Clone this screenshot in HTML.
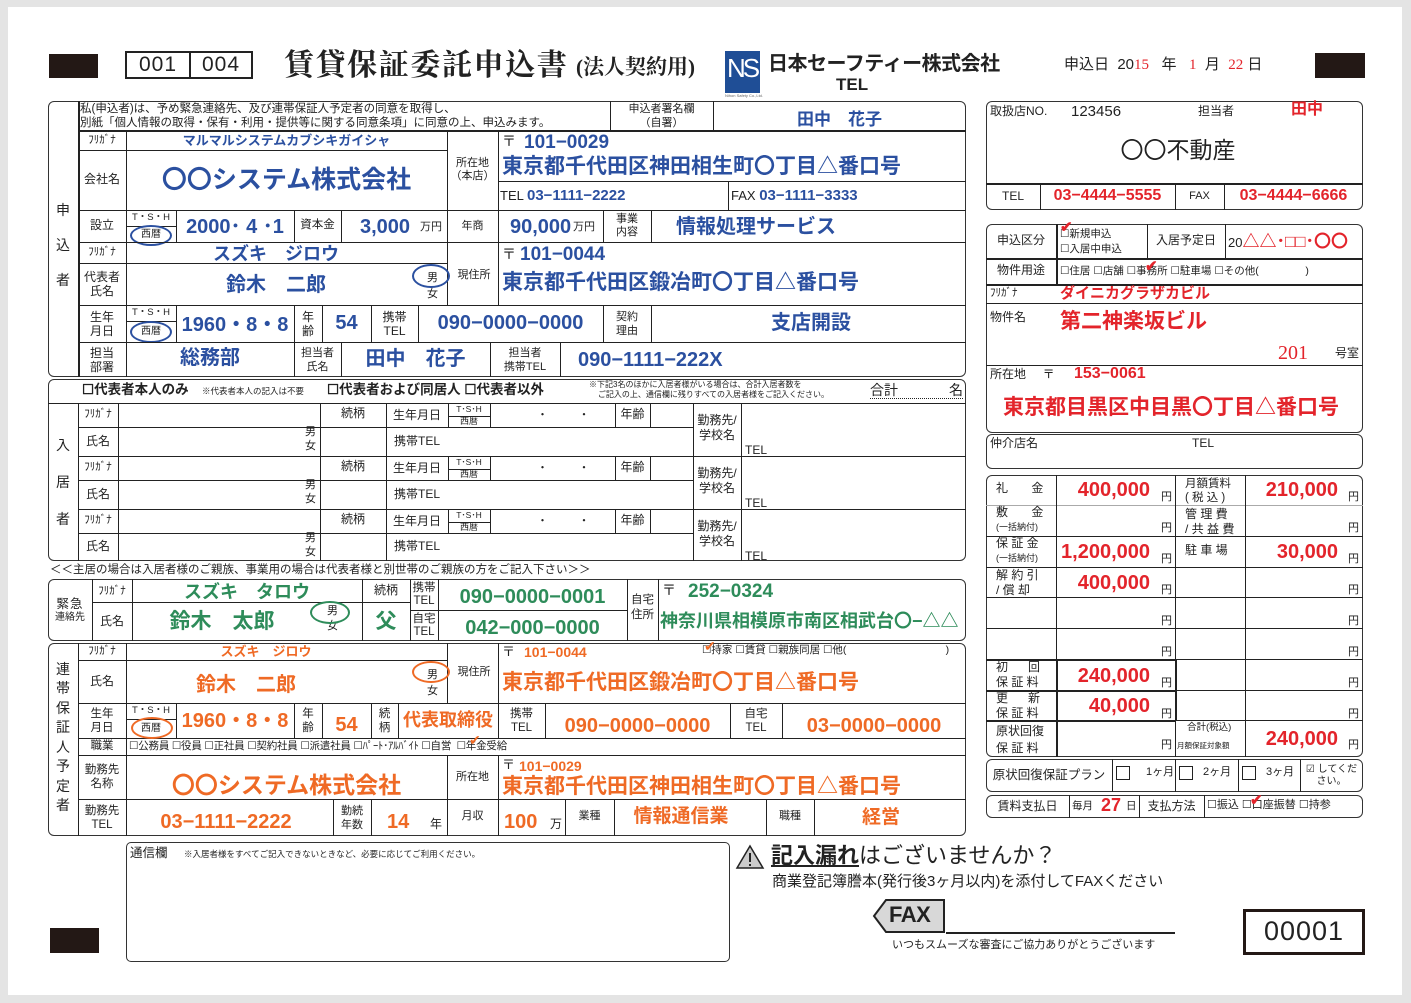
<!DOCTYPE html>
<html><head><meta charset="utf-8">
<style>
*{margin:0;padding:0;box-sizing:border-box}
body{width:1411px;height:1003px;background:#e4e4e4;position:relative;overflow:hidden;font-family:"Liberation Sans","Noto Sans CJK JP",sans-serif;color:#222}
.sheet{position:absolute;left:8px;top:7px;width:1394px;height:988px;background:#fff}
.a{position:absolute;white-space:nowrap;line-height:1}
.c{position:absolute;display:flex;align-items:center;justify-content:center;text-align:center;line-height:1.15;white-space:nowrap}
.h{position:absolute;height:0;border-top:1px solid #222}
.v{position:absolute;width:0;border-left:1px solid #222}
.bx{position:absolute;border:1.5px solid #333;border-radius:6px}
.B{color:#2b50a0;font-weight:bold}
.G{color:#2e8c5a;font-weight:bold}
.O{color:#ef6a25;font-weight:bold}
.R{color:#e3242b;font-weight:bold}
.el{position:absolute;border:2px solid;border-radius:50%}
.s{font-size:11px}
</style></head><body>
<div class="sheet"></div>

<!-- header -->
<div class="a" style="left:49px;top:54px;width:49px;height:24px;background:#231815"></div>
<div class="a" style="left:125px;top:51px;width:128px;height:28px;border:2px solid #222"></div>
<div class="v" style="left:189px;top:51px;height:28px;border-left-width:2px"></div>
<div class="c" style="left:127px;top:52px;width:62px;height:26px;font-size:21px;letter-spacing:1px">001</div>
<div class="c" style="left:190px;top:52px;width:62px;height:26px;font-size:21px;letter-spacing:1px">004</div>
<div class="a" style="left:284px;top:51px;font-family:'Liberation Serif','Noto Serif CJK SC',serif;font-size:30px;letter-spacing:1.6px;font-weight:bold">賃貸保証委託申込書</div>
<div class="a" style="left:576px;top:57px;font-family:'Liberation Serif','Noto Serif CJK SC',serif;font-size:21px;font-weight:bold">(法人契約用)</div>
<div class="a" style="left:725px;top:51px;width:35px;height:42px;background:#1f4e96"></div>
<div class="a" style="left:727px;top:55px;color:#fff;font-size:26px;font-family:'Liberation Sans',sans-serif;letter-spacing:-3px">NS</div>
<div class="a" style="left:725px;top:94px;font-size:4px;color:#666">Nihon Safety Co.,Ltd.</div>
<div class="a" style="left:768px;top:54px;font-size:20px;font-weight:bold;letter-spacing:-0.5px">日本セーフティー株式会社</div>
<div class="a" style="left:836px;top:76px;font-size:17px;font-weight:bold">TEL</div>
<div class="a" style="left:1064px;top:57px;font-size:15px">申込日&nbsp; 20<span style="color:#e3242b;font-family:'Liberation Serif',serif">15</span>&nbsp;&nbsp; 年&nbsp;&nbsp; <span style="color:#e3242b;font-family:'Liberation Serif',serif">1</span>&nbsp; 月&nbsp;&nbsp;<span style="color:#e3242b;font-family:'Liberation Serif',serif">22</span> 日</div>
<div class="a" style="left:1315px;top:53px;width:50px;height:25px;background:#231815"></div>

<!-- Section 1 -->
<div class="bx" style="left:48px;top:101px;width:918px;height:276px"></div>
<div class="v" style="left:78px;top:101px;height:276px;border-left-width:2px"></div>
<div class="c" style="left:48px;top:195px;width:30px;height:100px;font-size:14px;line-height:35px;flex-direction:column">申<br>込<br>者</div>
<div class="a" style="left:80px;top:103px;font-size:11.5px;line-height:13.5px">私(申込者)は、予め緊急連絡先、及び連帯保証人予定者の同意を取得し、<br>別紙「個人情報の取得・保有・利用・提供等に関する同意条項」に同意の上、申込みます。</div>
<div class="v" style="left:610px;top:101px;height:29px"></div>
<div class="v" style="left:713px;top:101px;height:29px"></div>
<div class="c s" style="left:610px;top:101px;width:103px;height:29px;line-height:14px">申込者署名欄<br>（自署）</div>
<div class="c B" style="left:713px;top:107px;width:253px;height:26px;font-size:17px">田中　花子</div>
<div class="h" style="left:78px;top:130px;width:888px;border-top-width:2px"></div>
<div class="h" style="left:78px;top:150px;width:369px"></div>
<div class="h" style="left:78px;top:210px;width:888px"></div>
<div class="v" style="left:126px;top:130px;height:247px"></div>
<div class="v" style="left:447px;top:130px;height:175px"></div>
<div class="v" style="left:498px;top:130px;height:175px"></div>
<div class="h" style="left:498px;top:181px;width:468px"></div>
<div class="v" style="left:728px;top:181px;height:29px"></div>
<div class="c s" style="left:78px;top:130px;width:48px;height:20px">ﾌﾘｶﾞﾅ</div>
<div class="c B" style="left:126px;top:130px;width:321px;height:22px;font-size:13px">マルマルシステムカブシキガイシャ</div>
<div class="c" style="left:78px;top:150px;width:48px;height:60px;font-size:12px">会社名</div>
<div class="c B" style="left:126px;top:150px;width:321px;height:60px;font-size:25px">〇〇システム株式会社</div>
<div class="c s" style="left:447px;top:150px;width:51px;height:40px;line-height:13px">所在地<br>（本店）</div>
<div class="a" style="left:502px;top:134px;font-size:14px">〒</div>
<div class="a B" style="left:524px;top:133px;font-size:19px">101−0029</div>
<div class="a B" style="left:502px;top:156px;font-size:21px">東京都千代田区神田相生町〇丁目△番口号</div>
<div class="a" style="left:500px;top:188px;font-size:13px">TEL <span class="B" style="font-size:15px">03−1111−2222</span></div>
<div class="a" style="left:731px;top:188px;font-size:13px">FAX <span class="B" style="font-size:15px">03−1111−3333</span></div>
<!-- 設立 row -->
<div class="v" style="left:176px;top:210px;height:32px"></div>
<div class="v" style="left:294px;top:210px;height:32px"></div>
<div class="v" style="left:341px;top:210px;height:32px"></div>
<div class="v" style="left:603px;top:210px;height:32px"></div>
<div class="v" style="left:651px;top:210px;height:32px"></div>
<div class="h" style="left:126px;top:226px;width:50px"></div>
<div class="c" style="left:78px;top:210px;width:48px;height:32px;font-size:12px">設立</div>
<div class="c" style="left:126px;top:211px;width:50px;height:15px;font-size:9.5px">T・S・H</div>
<div class="c" style="left:126px;top:227px;width:50px;height:15px;font-size:10px">西暦</div>
<div class="el" style="left:130px;top:225px;width:42px;height:21px;border-color:#2b50a0"></div>
<div class="c B" style="left:176px;top:212px;width:118px;height:30px;font-size:20px">2000･ 4 ･1</div>
<div class="c" style="left:294px;top:210px;width:47px;height:32px;font-size:11.5px">資本金</div>
<div class="a B" style="left:360px;top:217px;font-size:20px">3,000</div><div class="a" style="left:420px;top:222px;font-size:11px">万円</div>
<div class="c s" style="left:447px;top:210px;width:51px;height:32px">年商</div>
<div class="a B" style="left:510px;top:217px;font-size:20px">90,000</div><div class="a" style="left:573px;top:222px;font-size:11px">万円</div>
<div class="c s" style="left:603px;top:210px;width:48px;height:32px;line-height:13px">事業<br>内容</div>
<div class="c B" style="left:651px;top:212px;width:210px;height:30px;font-size:20px">情報処理サービス</div>
<div class="h" style="left:78px;top:242px;width:888px"></div>
<div class="h" style="left:78px;top:263px;width:369px"></div>
<div class="c s" style="left:78px;top:242px;width:48px;height:21px">ﾌﾘｶﾞﾅ</div>
<div class="c B" style="left:126px;top:242px;width:300px;height:24px;font-size:18px">スズキ　ジロウ</div>
<div class="c" style="left:78px;top:263px;width:48px;height:42px;font-size:12px;line-height:14px">代表者<br>氏名</div>
<div class="c B" style="left:126px;top:265px;width:300px;height:40px;font-size:20px">鈴木　二郎</div>
<div class="a" style="left:427px;top:270px;font-size:11px;line-height:16px">男<br>女</div>
<div class="el" style="left:412px;top:264px;width:38px;height:24px;border-color:#2b50a0"></div>
<div class="c s" style="left:450px;top:265px;width:48px;height:20px">現住所</div>
<div class="a" style="left:502px;top:247px;font-size:14px">〒</div>
<div class="a B" style="left:520px;top:245px;font-size:19px">101−0044</div>
<div class="a B" style="left:502px;top:272px;font-size:21px">東京都千代田区鍛冶町〇丁目△番口号</div>
<div class="h" style="left:78px;top:305px;width:888px"></div>
<!-- 生年月日 row -->
<div class="v" style="left:176px;top:305px;height:37px"></div>
<div class="v" style="left:294px;top:305px;height:37px"></div>
<div class="v" style="left:322px;top:305px;height:37px"></div>
<div class="v" style="left:371px;top:305px;height:37px"></div>
<div class="v" style="left:418px;top:305px;height:37px"></div>
<div class="v" style="left:603px;top:305px;height:37px"></div>
<div class="v" style="left:651px;top:305px;height:37px"></div>
<div class="h" style="left:126px;top:321px;width:50px"></div>
<div class="c" style="left:78px;top:305px;width:48px;height:37px;font-size:12px;line-height:14px">生年<br>月日</div>
<div class="c" style="left:126px;top:306px;width:50px;height:15px;font-size:9.5px">T・S・H</div>
<div class="c" style="left:126px;top:323px;width:50px;height:17px;font-size:10px">西暦</div>
<div class="el" style="left:130px;top:321px;width:42px;height:22px;border-color:#2b50a0"></div>
<div class="c B" style="left:176px;top:308px;width:118px;height:34px;font-size:20px">1960・8・8</div>
<div class="c" style="left:294px;top:305px;width:28px;height:37px;font-size:12px;line-height:14px">年<br>齢</div>
<div class="c B" style="left:322px;top:305px;width:49px;height:37px;font-size:20px">54</div>
<div class="c" style="left:371px;top:305px;width:47px;height:37px;font-size:12px;line-height:14px">携帯<br>TEL</div>
<div class="c B" style="left:418px;top:305px;width:185px;height:37px;font-size:20px">090−0000−0000</div>
<div class="c s" style="left:603px;top:305px;width:48px;height:37px;line-height:14px">契約<br>理由</div>
<div class="c B" style="left:651px;top:305px;width:320px;height:37px;font-size:20px">支店開設</div>
<div class="h" style="left:78px;top:342px;width:888px"></div>
<div class="v" style="left:294px;top:342px;height:35px"></div>
<div class="v" style="left:341px;top:342px;height:35px"></div>
<div class="v" style="left:490px;top:342px;height:35px"></div>
<div class="v" style="left:560px;top:342px;height:35px"></div>
<div class="c" style="left:78px;top:342px;width:48px;height:35px;font-size:12px;line-height:14px">担当<br>部署</div>
<div class="c B" style="left:126px;top:342px;width:168px;height:33px;font-size:20px">総務部</div>
<div class="c s" style="left:294px;top:342px;width:47px;height:35px;line-height:14px">担当者<br>氏名</div>
<div class="c B" style="left:341px;top:342px;width:149px;height:35px;font-size:20px">田中　花子</div>
<div class="c s" style="left:490px;top:342px;width:70px;height:35px;line-height:14px">担当者<br>携帯TEL</div>
<div class="a B" style="left:578px;top:350px;font-size:20px">090−1111−222X</div>

<!-- Section 2 入居者 -->
<div class="bx" style="left:48px;top:379px;width:918px;height:182px"></div>
<div class="a" style="left:82px;top:383px;font-size:13.5px;font-weight:bold">☐代表者本人のみ</div>
<div class="a" style="left:202px;top:387px;font-size:8.5px">※代表者本人の記入は不要</div>
<div class="a" style="left:327px;top:383px;font-size:13.5px;font-weight:bold">☐代表者および同居人 ☐代表者以外</div>
<div class="a" style="left:589px;top:380px;font-size:8px;line-height:10px">※下記3名のほかに入居者様がいる場合は、合計入居者数を<br>&nbsp;&nbsp;&nbsp;&nbsp;ご記入の上、通信欄に残りすべての入居者様をご記入ください。</div>
<div class="a" style="left:870px;top:383px;font-size:14px;width:93px;border-bottom:1px dotted #222;padding-bottom:1px">合計<span style="float:right">名</span></div>
<div class="h" style="left:48px;top:403px;width:918px"></div>
<div class="v" style="left:78px;top:403px;height:158px"></div>
<div class="c" style="left:48px;top:403px;width:30px;height:158px;font-size:14px;line-height:37px;flex-direction:column">入<br>居<br>者</div>
<div class="h" style="left:78px;top:456px;width:888px"></div>
<div class="h" style="left:78px;top:509px;width:888px"></div>

<div class="h" style="left:78px;top:427px;width:615px"></div>
<div class="h" style="left:78px;top:480px;width:615px"></div>
<div class="h" style="left:78px;top:533px;width:615px"></div>
<div class="v" style="left:118px;top:403px;height:158px"></div>
<div class="v" style="left:320px;top:403px;height:158px"></div>
<div class="v" style="left:386px;top:403px;height:158px"></div>
<div class="v" style="left:693px;top:403px;height:158px"></div>
<div class="v" style="left:741px;top:403px;height:158px"></div>
<div class="v" style="left:448px;top:403px;height:24px"></div><div class="v" style="left:490px;top:403px;height:24px"></div><div class="v" style="left:615px;top:403px;height:24px"></div><div class="v" style="left:650px;top:403px;height:24px"></div>
<div class="v" style="left:448px;top:456px;height:24px"></div><div class="v" style="left:490px;top:456px;height:24px"></div><div class="v" style="left:615px;top:456px;height:24px"></div><div class="v" style="left:650px;top:456px;height:24px"></div>
<div class="v" style="left:448px;top:509px;height:24px"></div><div class="v" style="left:490px;top:509px;height:24px"></div><div class="v" style="left:615px;top:509px;height:24px"></div><div class="v" style="left:650px;top:509px;height:24px"></div>
<div class="h" style="left:448px;top:416px;width:42px"></div>
<div class="h" style="left:448px;top:469px;width:42px"></div>
<div class="h" style="left:448px;top:522px;width:42px"></div>

<div class="c s" style="left:78px;top:404px;width:40px;height:20px">ﾌﾘｶﾞﾅ</div>
<div class="c" style="left:78px;top:427px;width:40px;height:29px;font-size:12px">氏名</div>
<div class="a s" style="left:305px;top:425px;line-height:14px">男<br>女</div>
<div class="c" style="left:320px;top:404px;width:66px;height:20px;font-size:12px">続柄</div>
<div class="c" style="left:386px;top:404px;width:62px;height:24px;font-size:12px">生年月日</div>
<div class="c" style="left:448px;top:404px;width:42px;height:12px;font-size:8.5px">T･S･H</div>
<div class="c" style="left:448px;top:416px;width:42px;height:11px;font-size:9px">西暦</div>
<div class="a" style="left:537px;top:410px;font-size:11px">・&nbsp;&nbsp;&nbsp;&nbsp;&nbsp;&nbsp;&nbsp;&nbsp;&nbsp;&nbsp;・</div>
<div class="c" style="left:615px;top:404px;width:35px;height:22px;font-size:12px">年齢</div>
<div class="c" style="left:386px;top:427px;width:62px;height:29px;font-size:12px">携帯TEL</div>
<div class="c" style="left:693px;top:410px;width:48px;height:36px;font-size:12px;line-height:15px">勤務先/<br>学校名</div>
<div class="a" style="left:745px;top:444px;font-size:12px">TEL</div>

<div class="c s" style="left:78px;top:457px;width:40px;height:20px">ﾌﾘｶﾞﾅ</div>
<div class="c" style="left:78px;top:480px;width:40px;height:29px;font-size:12px">氏名</div>
<div class="a s" style="left:305px;top:478px;line-height:14px">男<br>女</div>
<div class="c" style="left:320px;top:457px;width:66px;height:20px;font-size:12px">続柄</div>
<div class="c" style="left:386px;top:457px;width:62px;height:24px;font-size:12px">生年月日</div>
<div class="c" style="left:448px;top:457px;width:42px;height:12px;font-size:8.5px">T･S･H</div>
<div class="c" style="left:448px;top:469px;width:42px;height:11px;font-size:9px">西暦</div>
<div class="a" style="left:537px;top:463px;font-size:11px">・&nbsp;&nbsp;&nbsp;&nbsp;&nbsp;&nbsp;&nbsp;&nbsp;&nbsp;&nbsp;・</div>
<div class="c" style="left:615px;top:457px;width:35px;height:22px;font-size:12px">年齢</div>
<div class="c" style="left:386px;top:480px;width:62px;height:29px;font-size:12px">携帯TEL</div>
<div class="c" style="left:693px;top:463px;width:48px;height:36px;font-size:12px;line-height:15px">勤務先/<br>学校名</div>
<div class="a" style="left:745px;top:497px;font-size:12px">TEL</div>

<div class="c s" style="left:78px;top:510px;width:40px;height:20px">ﾌﾘｶﾞﾅ</div>
<div class="c" style="left:78px;top:533px;width:40px;height:28px;font-size:12px">氏名</div>
<div class="a s" style="left:305px;top:531px;line-height:14px">男<br>女</div>
<div class="c" style="left:320px;top:510px;width:66px;height:20px;font-size:12px">続柄</div>
<div class="c" style="left:386px;top:510px;width:62px;height:24px;font-size:12px">生年月日</div>
<div class="c" style="left:448px;top:510px;width:42px;height:12px;font-size:8.5px">T･S･H</div>
<div class="c" style="left:448px;top:522px;width:42px;height:11px;font-size:9px">西暦</div>
<div class="a" style="left:537px;top:516px;font-size:11px">・&nbsp;&nbsp;&nbsp;&nbsp;&nbsp;&nbsp;&nbsp;&nbsp;&nbsp;&nbsp;・</div>
<div class="c" style="left:615px;top:510px;width:35px;height:22px;font-size:12px">年齢</div>
<div class="c" style="left:386px;top:533px;width:62px;height:28px;font-size:12px">携帯TEL</div>
<div class="c" style="left:693px;top:516px;width:48px;height:36px;font-size:12px;line-height:15px">勤務先/<br>学校名</div>
<div class="a" style="left:745px;top:550px;font-size:12px">TEL</div>

<div class="a" style="left:50px;top:565px;font-size:11.5px">＜＜主居の場合は入居者様のご親族、事業用の場合は代表者様と別世帯のご親族の方をご記入下さい＞＞</div>

<!-- Section 3 緊急連絡先 -->
<div class="bx" style="left:48px;top:579px;width:918px;height:62px"></div>
<div class="v" style="left:92px;top:579px;height:62px"></div>
<div class="v" style="left:132px;top:579px;height:62px"></div>
<div class="v" style="left:362px;top:579px;height:62px"></div>
<div class="v" style="left:410px;top:579px;height:62px"></div>
<div class="v" style="left:438px;top:579px;height:62px"></div>
<div class="v" style="left:627px;top:579px;height:62px"></div>
<div class="v" style="left:658px;top:579px;height:62px"></div>
<div class="h" style="left:92px;top:602px;width:318px"></div>
<div class="h" style="left:410px;top:610px;width:217px"></div>
<div class="a" style="left:48px;top:597px;width:44px;text-align:center;line-height:14px"><div style="font-size:12.5px;letter-spacing:1px">緊急</div><div style="font-size:10px">連絡先</div></div>
<div class="c s" style="left:92px;top:580px;width:40px;height:22px">ﾌﾘｶﾞﾅ</div>
<div class="c G" style="left:132px;top:580px;width:230px;height:24px;font-size:18px">スズキ　タロウ</div>
<div class="c" style="left:92px;top:602px;width:40px;height:39px;font-size:12px">氏名</div>
<div class="c G" style="left:132px;top:604px;width:180px;height:37px;font-size:21px">鈴木　太郎</div>
<div class="a s" style="left:327px;top:604px;line-height:15px">男<br>女</div>
<div class="el" style="left:310px;top:601px;width:40px;height:23px;border-color:#2e8c5a"></div>
<div class="c" style="left:362px;top:580px;width:48px;height:22px;font-size:12px">続柄</div>
<div class="c G" style="left:362px;top:604px;width:48px;height:37px;font-size:21px">父</div>
<div class="c" style="left:410px;top:580px;width:28px;height:30px;font-size:11.5px;line-height:13px">携帯<br>TEL</div>
<div class="c" style="left:410px;top:611px;width:28px;height:30px;font-size:11.5px;line-height:13px">自宅<br>TEL</div>
<div class="c G" style="left:438px;top:582px;width:189px;height:30px;font-size:20px">090−0000−0001</div>
<div class="c G" style="left:438px;top:613px;width:189px;height:30px;font-size:20px">042−000−0000</div>
<div class="c" style="left:627px;top:590px;width:31px;height:36px;font-size:11.5px;line-height:15px">自宅<br>住所</div>
<div class="a" style="left:662px;top:583px;font-size:14px">〒</div>
<div class="a G" style="left:688px;top:582px;font-size:19px">252−0324</div>
<div class="a G" style="left:660px;top:612px;font-size:18px">神奈川県相模原市南区相武台〇−△△</div>

<!-- Section 4 連帯保証人 -->
<div class="bx" style="left:48px;top:643px;width:918px;height:193px"></div>
<div class="v" style="left:78px;top:643px;height:193px"></div>
<div class="c" style="left:48px;top:655px;width:30px;height:165px;font-size:14px;line-height:19.5px;flex-direction:column">連<br>帯<br>保<br>証<br>人<br>予<br>定<br>者</div>
<div class="v" style="left:126px;top:643px;height:193px"></div>
<div class="h" style="left:78px;top:660px;width:369px"></div>
<div class="h" style="left:78px;top:703px;width:888px"></div>
<div class="h" style="left:78px;top:738px;width:888px"></div>
<div class="h" style="left:78px;top:755px;width:888px"></div>
<div class="h" style="left:78px;top:799px;width:888px"></div>
<div class="v" style="left:447px;top:643px;height:60px"></div>
<div class="v" style="left:498px;top:643px;height:60px"></div>
<div class="c s" style="left:78px;top:643px;width:48px;height:17px">ﾌﾘｶﾞﾅ</div>
<div class="c O" style="left:126px;top:643px;width:280px;height:18px;font-size:13px">スズキ　ジロウ</div>
<div class="c" style="left:78px;top:660px;width:48px;height:43px;font-size:12px">氏名</div>
<div class="c O" style="left:126px;top:664px;width:240px;height:42px;font-size:20px">鈴木　二郎</div>
<div class="a s" style="left:427px;top:667px;line-height:16px">男<br>女</div>
<div class="el" style="left:412px;top:661px;width:38px;height:22px;border-color:#ef6a25"></div>
<div class="c s" style="left:450px;top:662px;width:48px;height:20px">現住所</div>
<div class="a" style="left:502px;top:645px;font-size:13px">〒</div>
<div class="a O" style="left:524px;top:645px;font-size:14px">101−0044</div>
<div class="a" style="left:702px;top:645px;font-size:10.5px"><span style="color:#ef6a25;font-size:14px;position:absolute;left:2px;top:-6px">✔</span>☐持家 ☐賃貸 ☐親族同居 ☐他(&nbsp;&nbsp;&nbsp;&nbsp;&nbsp;&nbsp;&nbsp;&nbsp;&nbsp;&nbsp;&nbsp;&nbsp;&nbsp;&nbsp;&nbsp;&nbsp;&nbsp;&nbsp;&nbsp;&nbsp;&nbsp;&nbsp;&nbsp;&nbsp;&nbsp;&nbsp;&nbsp;&nbsp;&nbsp;&nbsp;&nbsp;&nbsp;&nbsp;&nbsp;)</div>
<div class="a O" style="left:502px;top:672px;font-size:21px">東京都千代田区鍛冶町〇丁目△番口号</div>
<div class="v" style="left:176px;top:703px;height:35px"></div>
<div class="v" style="left:294px;top:703px;height:35px"></div>
<div class="v" style="left:322px;top:703px;height:35px"></div>
<div class="v" style="left:371px;top:703px;height:35px"></div>
<div class="v" style="left:398px;top:703px;height:35px"></div>
<div class="v" style="left:498px;top:703px;height:35px"></div>
<div class="v" style="left:545px;top:703px;height:35px"></div>
<div class="v" style="left:730px;top:703px;height:35px"></div>
<div class="v" style="left:782px;top:703px;height:35px"></div>
<div class="h" style="left:126px;top:719px;width:50px"></div>
<div class="c" style="left:78px;top:703px;width:48px;height:35px;font-size:11.5px;line-height:14px">生年<br>月日</div>
<div class="c" style="left:126px;top:704px;width:50px;height:15px;font-size:9.5px">T・S・H</div>
<div class="c" style="left:126px;top:720px;width:50px;height:17px;font-size:10px">西暦</div>
<div class="el" style="left:131px;top:717px;width:42px;height:22px;border-color:#ef6a25"></div>
<div class="c O" style="left:176px;top:705px;width:118px;height:33px;font-size:20px">1960・8・8</div>
<div class="c" style="left:294px;top:703px;width:28px;height:35px;font-size:11.5px;line-height:14px">年<br>齢</div>
<div class="c O" style="left:322px;top:708px;width:49px;height:35px;font-size:20px">54</div>
<div class="c" style="left:371px;top:703px;width:27px;height:35px;font-size:11.5px;line-height:14px">続<br>柄</div>
<div class="c O" style="left:398px;top:703px;width:100px;height:35px;font-size:18px">代表取締役</div>
<div class="c" style="left:498px;top:703px;width:47px;height:35px;font-size:11.5px;line-height:14px">携帯<br>TEL</div>
<div class="c O" style="left:545px;top:710px;width:185px;height:33px;font-size:20px">090−0000−0000</div>
<div class="c" style="left:730px;top:703px;width:52px;height:35px;font-size:11.5px;line-height:14px">自宅<br>TEL</div>
<div class="c O" style="left:782px;top:710px;width:184px;height:33px;font-size:20px">03−0000−0000</div>
<div class="c" style="left:78px;top:738px;width:48px;height:17px;font-size:11.5px">職業</div>
<div class="a" style="left:129px;top:741px;font-size:10.5px;letter-spacing:-0.2px">☐公務員 ☐役員 ☐正社員 ☐契約社員 ☐派遣社員 ☐ﾊﾟｰﾄ･ｱﾙﾊﾞｲﾄ ☐自営&nbsp;&nbsp;☐年金受給</div>
<div class="a" style="left:469px;top:733px;font-size:14px;color:#ef6a25">✔</div>
<div class="c" style="left:78px;top:755px;width:48px;height:44px;font-size:11.5px;line-height:14px">勤務先<br>名称</div>
<div class="c O" style="left:126px;top:763px;width:321px;height:44px;font-size:23px">〇〇システム株式会社</div>
<div class="v" style="left:447px;top:755px;height:44px"></div>
<div class="v" style="left:498px;top:755px;height:44px"></div>
<div class="c s" style="left:447px;top:755px;width:51px;height:44px">所在地</div>
<div class="a" style="left:502px;top:758px;font-size:13px">〒</div>
<div class="a O" style="left:519px;top:759px;font-size:14px">101−0029</div>
<div class="a O" style="left:502px;top:776px;font-size:21px">東京都千代田区神田相生町〇丁目△番口号</div>
<div class="v" style="left:333px;top:799px;height:37px"></div>
<div class="v" style="left:371px;top:799px;height:37px"></div>
<div class="v" style="left:447px;top:799px;height:37px"></div>
<div class="v" style="left:498px;top:799px;height:37px"></div>
<div class="v" style="left:565px;top:799px;height:37px"></div>
<div class="v" style="left:614px;top:799px;height:37px"></div>
<div class="v" style="left:766px;top:799px;height:37px"></div>
<div class="v" style="left:814px;top:799px;height:37px"></div>
<div class="c" style="left:78px;top:799px;width:48px;height:37px;font-size:11.5px;line-height:14px">勤務先<br>TEL</div>
<div class="c O" style="left:126px;top:806px;width:200px;height:33px;font-size:20px">03−1111−2222</div>
<div class="c" style="left:333px;top:799px;width:38px;height:37px;font-size:11px;line-height:14px">勤続<br>年数</div>
<div class="a O" style="left:387px;top:812px;font-size:20px">14</div><div class="a" style="left:430px;top:818px;font-size:12px">年</div>
<div class="c s" style="left:447px;top:799px;width:51px;height:35px">月収</div>
<div class="a O" style="left:504px;top:812px;font-size:20px">100</div><div class="a" style="left:550px;top:818px;font-size:12px">万</div>
<div class="c s" style="left:565px;top:799px;width:49px;height:35px">業種</div>
<div class="c O" style="left:614px;top:799px;width:134px;height:35px;font-size:19px">情報通信業</div>
<div class="c s" style="left:766px;top:799px;width:48px;height:35px">職種</div>
<div class="c O" style="left:814px;top:799px;width:134px;height:37px;font-size:19px">経営</div>

<!-- 通信欄 -->
<div class="bx" style="left:126px;top:842px;width:604px;height:120px;border-radius:5px"></div>
<div class="a" style="left:130px;top:847px;font-size:12.5px">通信欄</div>
<div class="a" style="left:184px;top:850px;font-size:8.5px">※入居者様をすべてご記入できないときなど、必要に応じてご利用ください。</div>
<div class="a" style="left:50px;top:928px;width:49px;height:25px;background:#231815"></div>

<!-- bottom right -->
<svg class="a" style="left:735px;top:844px" width="30" height="26" viewBox="0 0 30 26"><polygon points="15,2 28,24 2,24" fill="#ccc" stroke="#222" stroke-width="1.5"/><rect x="14" y="9" width="2" height="9" fill="#222"/><rect x="14" y="20" width="2" height="2" fill="#222"/></svg>
<div class="a" style="left:771px;top:845px;font-size:22px;font-weight:bold"><span style="text-decoration:underline">記入漏れ</span><span style="font-weight:normal">はございませんか？</span></div>
<div class="a" style="left:772px;top:874px;font-size:15px">商業登記簿謄本(発行後3ヶ月以内)を添付してFAXください</div>
<svg class="a" style="left:872px;top:899px" width="74" height="35" viewBox="0 0 74 35"><polygon points="14,1 72,1 72,33 14,33 2,17" fill="#d8d8d8" stroke="#222" stroke-width="2"/></svg>
<div class="a" style="left:889px;top:904px;font-size:22px;font-weight:bold;letter-spacing:-0.5px">FAX</div>
<div class="h" style="left:946px;top:932px;width:229px;border-top-width:2px"></div>
<div class="a" style="left:892px;top:940px;font-size:11px">いつもスムーズな審査にご協力ありがとうございます</div>
<div class="a" style="left:1243px;top:909px;width:122px;height:46px;border:3px solid #231815"></div>
<div class="c" style="left:1246px;top:912px;width:116px;height:40px;font-size:27px;letter-spacing:1px">00001</div>

<!-- Right box A -->
<div class="bx" style="left:986px;top:101px;width:377px;height:109px"></div>
<div class="h" style="left:986px;top:183px;width:377px;border-top-width:2px"></div>
<div class="v" style="left:1040px;top:183px;height:27px"></div>
<div class="v" style="left:1175px;top:183px;height:27px"></div>
<div class="v" style="left:1224px;top:183px;height:27px"></div>
<div class="a" style="left:990px;top:105px;font-size:12px">取扱店NO.</div>
<div class="a" style="left:1071px;top:104px;font-size:15px">123456</div>
<div class="a" style="left:1198px;top:105px;font-size:12px">担当者</div>
<div class="a R" style="left:1291px;top:102px;font-size:16px">田中</div>
<div class="c" style="left:986px;top:134px;width:384px;height:32px;font-size:23px">〇〇不動産</div>
<div class="c" style="left:986px;top:183px;width:54px;height:27px;font-size:12px">TEL</div>
<div class="c R" style="left:1040px;top:183px;width:135px;height:27px;font-size:16px">03−4444−5555</div>
<div class="c" style="left:1175px;top:183px;width:49px;height:27px;font-size:11px">FAX</div>
<div class="c R" style="left:1224px;top:183px;width:139px;height:27px;font-size:16px">03−4444−6666</div>

<!-- Right box B -->
<div class="bx" style="left:986px;top:224px;width:377px;height:209px"></div>
<div class="h" style="left:986px;top:258px;width:377px;border-top-width:2px"></div>
<div class="h" style="left:986px;top:284px;width:377px;border-top-width:2px"></div>
<div class="h" style="left:986px;top:303px;width:377px"></div>
<div class="h" style="left:986px;top:365px;width:377px"></div>
<div class="v" style="left:1056px;top:224px;height:60px;border-left-width:2px"></div>
<div class="v" style="left:1147px;top:224px;height:34px"></div>
<div class="v" style="left:1225px;top:224px;height:34px"></div>
<div class="c" style="left:986px;top:224px;width:70px;height:34px;font-size:12px">申込区分</div>
<div class="a" style="left:1060px;top:227px;font-size:10.5px;line-height:15px">☐新規申込<br>☐入居中申込</div>
<div class="a R" style="left:1060px;top:220px;font-size:15px">✔</div>
<div class="c" style="left:1147px;top:224px;width:78px;height:34px;font-size:12px">入居予定日</div>
<div class="a" style="left:1228px;top:233px;font-size:13px">20<span class="R" style="font-size:17px">△△･□□･〇〇</span></div>
<div class="c" style="left:986px;top:258px;width:70px;height:26px;font-size:12px">物件用途</div>
<div class="a" style="left:1060px;top:266px;font-size:10.5px">☐住居 ☐店舗 ☐事務所 ☐駐車場 ☐その他(&nbsp;&nbsp;&nbsp;&nbsp;&nbsp;&nbsp;&nbsp;&nbsp;&nbsp;&nbsp;&nbsp;&nbsp;&nbsp;&nbsp;&nbsp;&nbsp;)</div>
<div class="a R" style="left:1145px;top:259px;font-size:15px">✔</div>
<div class="a s" style="left:990px;top:288px">ﾌﾘｶﾞﾅ</div>
<div class="a R" style="left:1060px;top:286px;font-size:15px">ダイニカグラザカビル</div>
<div class="a" style="left:990px;top:311px;font-size:12px">物件名</div>
<div class="a R" style="left:1060px;top:311px;font-size:21px">第二神楽坂ビル</div>
<div class="a R" style="left:1278px;top:343px;font-size:20px;font-family:'Liberation Serif',serif;font-weight:normal">201</div>
<div class="a" style="left:1335px;top:347px;font-size:12px">号室</div>
<div class="a" style="left:990px;top:368px;font-size:12px">所在地&nbsp;&nbsp;&nbsp;&nbsp;&nbsp;〒</div>
<div class="a R" style="left:1074px;top:366px;font-size:16px">153−0061</div>
<div class="a R" style="left:1003px;top:397px;font-size:21px">東京都目黒区中目黒〇丁目△番口号</div>
<div class="bx" style="left:986px;top:434px;width:377px;height:35px"></div>
<div class="a" style="left:990px;top:437px;font-size:12px">仲介店名</div>
<div class="a" style="left:1192px;top:437px;font-size:12px">TEL</div>

<!-- Money box -->
<div class="bx" style="left:986px;top:475px;width:377px;height:282px"></div>
<div class="h" style="left:986px;top:505px;width:377px;border-color:#aaa"></div>
<div class="h" style="left:986px;top:536px;width:377px"></div>
<div class="h" style="left:986px;top:567px;width:377px"></div>
<div class="h" style="left:986px;top:597px;width:377px"></div>
<div class="h" style="left:986px;top:628px;width:377px"></div>
<div class="h" style="left:986px;top:659px;width:377px"></div>
<div class="h" style="left:986px;top:690px;width:377px"></div>
<div class="h" style="left:986px;top:720px;width:377px"></div>
<div class="h" style="left:986px;top:659px;width:189px;border-top-width:2px"></div>
<div class="h" style="left:986px;top:690px;width:189px;border-top-width:2px"></div>
<div class="h" style="left:986px;top:720px;width:189px;border-top-width:2px"></div>
<div class="v" style="left:1056px;top:475px;height:282px"></div>
<div class="v" style="left:1056px;top:659px;height:98px;border-left-width:2px"></div>
<div class="v" style="left:1175px;top:475px;height:282px"></div>
<div class="v" style="left:1175px;top:659px;height:61px;border-left-width:2px"></div>
<div class="v" style="left:1245px;top:475px;height:282px"></div>
<div class="a" style="left:996px;top:482px;font-size:12px">礼&nbsp;&nbsp;&nbsp;&nbsp;&nbsp;&nbsp;&nbsp;金</div>
<div class="a" style="left:996px;top:505px;font-size:12px;line-height:14px">敷&nbsp;&nbsp;&nbsp;&nbsp;&nbsp;&nbsp;&nbsp;金<br><span style="font-size:9px">(一括納付)</span></div>
<div class="a" style="left:996px;top:536px;font-size:12px;line-height:14px">保 証 金<br><span style="font-size:9px">(一括納付)</span></div>
<div class="a" style="left:996px;top:568px;font-size:12px;line-height:15px">解 約 引<br>/ 償 却</div>
<div class="a" style="left:996px;top:660px;font-size:12px;line-height:15px">初&nbsp;&nbsp;&nbsp;&nbsp;&nbsp;&nbsp;回<br>保 証 料</div>
<div class="a" style="left:996px;top:691px;font-size:12px;line-height:15px">更&nbsp;&nbsp;&nbsp;&nbsp;&nbsp;&nbsp;新<br>保 証 料</div>
<div class="a" style="left:996px;top:723px;font-size:12px;line-height:17px">原状回復<br>保 証 料</div>
<div class="a" style="left:1185px;top:477px;font-size:11.5px;line-height:14px">月額賃料<br>( 税 込 )</div>
<div class="a" style="left:1185px;top:507px;font-size:12px;line-height:15px">管 理 費<br>/ 共 益 費</div>
<div class="a" style="left:1185px;top:544px;font-size:12px">駐 車 場</div>
<div class="a" style="left:1187px;top:723px;font-size:9.5px">合計(税込)</div>
<div class="a" style="left:1177px;top:742px;font-size:7.5px">月額保証対象額</div>
<div class="a R" style="left:1056px;top:480px;width:94px;text-align:right;font-size:20px">400,000</div>
<div class="a R" style="left:1056px;top:542px;width:94px;text-align:right;font-size:20px">1,200,000</div>
<div class="a R" style="left:1056px;top:573px;width:94px;text-align:right;font-size:20px">400,000</div>
<div class="a R" style="left:1056px;top:666px;width:94px;text-align:right;font-size:20px">240,000</div>
<div class="a R" style="left:1056px;top:696px;width:94px;text-align:right;font-size:20px">40,000</div>
<div class="a R" style="left:1245px;top:480px;width:93px;text-align:right;font-size:20px">210,000</div>
<div class="a R" style="left:1245px;top:542px;width:93px;text-align:right;font-size:20px">30,000</div>
<div class="a R" style="left:1245px;top:729px;width:93px;text-align:right;font-size:20px">240,000</div>
<div class="a" style="left:1161px;top:482px;font-size:11px;line-height:31px">円<br>円<br>円<br>円<br>円<br>円<br>円<br>円<br>円</div>
<div class="a" style="left:1348px;top:482px;font-size:11px;line-height:31px">円<br>円<br>円<br>円<br>円<br>円<br>円<br>円<br>円</div>

<!-- plan -->
<div class="bx" style="left:986px;top:759px;width:377px;height:33px"></div>
<div class="v" style="left:1112px;top:759px;height:33px"></div>
<div class="v" style="left:1175px;top:759px;height:33px"></div>
<div class="v" style="left:1238px;top:759px;height:33px"></div>
<div class="v" style="left:1300px;top:759px;height:33px"></div>
<div class="c" style="left:986px;top:759px;width:126px;height:33px;font-size:12.5px">原状回復保証プラン</div>
<div class="a" style="left:1116px;top:766px;width:14px;height:14px;border:1.5px solid #222"></div><div class="a" style="left:1146px;top:767px;font-size:11px">1ヶ月</div>
<div class="a" style="left:1179px;top:766px;width:14px;height:14px;border:1.5px solid #222"></div><div class="a" style="left:1203px;top:767px;font-size:11px">2ヶ月</div>
<div class="a" style="left:1242px;top:766px;width:14px;height:14px;border:1.5px solid #222"></div><div class="a" style="left:1266px;top:767px;font-size:11px">3ヶ月</div>
<div class="c" style="left:1300px;top:759px;width:63px;height:33px;font-size:10px;line-height:12px">☑ してくだ<br>さい。</div>
<!-- payment -->
<div class="bx" style="left:986px;top:795px;width:377px;height:23px"></div>
<div class="v" style="left:1069px;top:795px;height:23px"></div>
<div class="v" style="left:1139px;top:795px;height:23px"></div>
<div class="v" style="left:1204px;top:795px;height:23px"></div>
<div class="c" style="left:986px;top:795px;width:83px;height:23px;font-size:12px">賃料支払日</div>
<div class="a" style="left:1072px;top:801px;font-size:10.5px">毎月</div>
<div class="a R" style="left:1101px;top:796px;font-size:18px">27</div>
<div class="a" style="left:1126px;top:801px;font-size:10.5px">日</div>
<div class="c" style="left:1139px;top:795px;width:65px;height:23px;font-size:12px">支払方法</div>
<div class="a" style="left:1207px;top:800px;font-size:11px">☐振込 ☐口座振替 ☐持参</div>
<div class="a R" style="left:1250px;top:793px;font-size:15px">✔</div>
</body></html>
